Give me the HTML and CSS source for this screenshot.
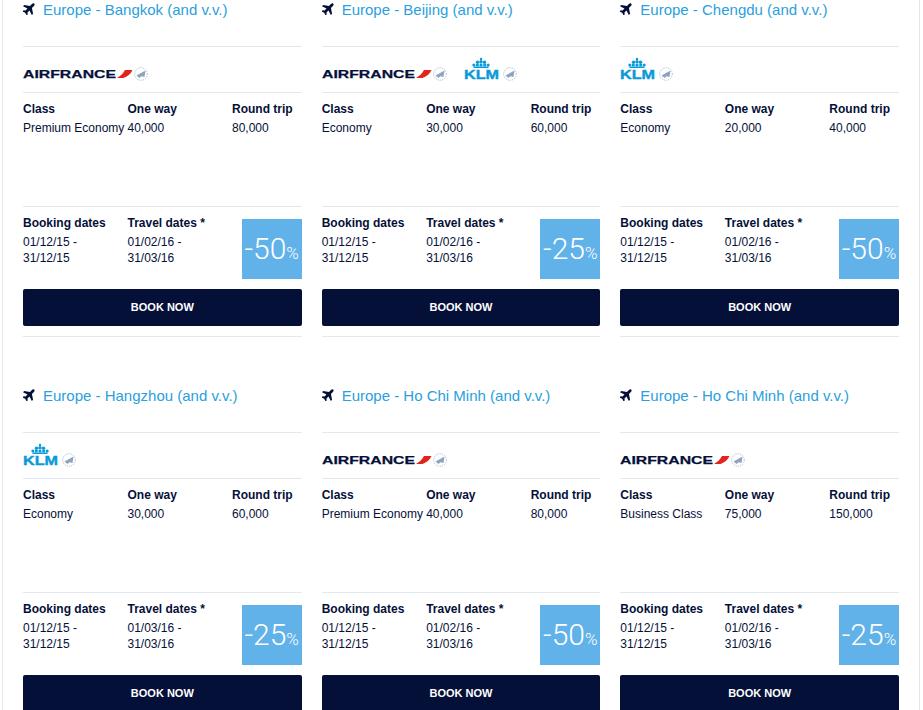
FILE: index.html
```html
<!DOCTYPE html>
<html lang="en">
<head>
<meta charset="utf-8">
<title>Offers</title>
<link rel="stylesheet" href="styles.css">
</head>
<body>
<svg class="defs" width="0" height="0" aria-hidden="true">
  <defs>
    <symbol id="plane" viewBox="0 0 24 24">
      <g transform="rotate(45 12 12)">
        <path d="M12 -3c1.700 0 2.800 1.800 2.800 4v5.500l9.700 6.500v3.500l-9.700-3v5.500l3 2.500v3l-5.800-1.700-5.800 1.700v-3l3-2.500v-5.500l-9.700 3v-3.500l9.700-6.500v-5.500c0-2.200 1.100-4 2.800-4z"/>
      </g>
    </symbol>
    <symbol id="seal" viewBox="0 0 14 14">
      <circle cx="7" cy="7" r="6.300" fill="none" stroke="#9fb0c8" stroke-width="1" stroke-dasharray="1 1.200"/>
      <path d="M2.500 8.500 11.500 3.500 10.500 10 7.500 9.200 5.500 11z" fill="#8fa3c0"/>
    </symbol>
    <symbol id="af" viewBox="0 0 110 12">
      <text x="0" y="9" textLength="93" lengthAdjust="spacingAndGlyphs" class="af-text">AIRFRANCE</text>
      <path d="M102 1h7.500c-1.500 3.500-4.500 6.500-9 8h-6.500c3.500-2 6.500-5 8-8z" fill="#e1251b"/>
    </symbol>
    <symbol id="klm" viewBox="0 0 38 24">
      <g fill="#0a9ad7">
        <circle cx="17" cy="2" r="1.200"/>
        <circle cx="13.500" cy="5.300" r="1.700"/><circle cx="17" cy="4.800" r="1.700"/><circle cx="20.500" cy="5.300" r="1.700"/>
        <circle cx="9.800" cy="7.900" r="1.500"/><circle cx="13.300" cy="8" r="1.600"/><circle cx="17" cy="8" r="1.600"/><circle cx="20.700" cy="8" r="1.600"/><circle cx="24.200" cy="7.900" r="1.500"/>
        <rect x="9.500" y="9.500" width="15" height="1.500"/>
      </g>
      <text x="0" y="22" textLength="35" lengthAdjust="spacingAndGlyphs" class="klm-text">KLM</text>
    </symbol>
  </defs>
</svg>
<main class="page">
  <article class="card">
    <h2 class="title"><svg class="plane"><use href="#plane"/></svg>Europe - Bangkok (and v.v.)</h2>
    <div class="logos"><svg class="logo-af"><use href="#af"/></svg><svg class="seal"><use href="#seal"/></svg></div>
    <div class="fares"><div><b>Class</b><span>Premium Economy</span></div><div><b>One way</b><span>40,000</span></div><div><b>Round trip</b><span>80,000</span></div></div>
    <div class="dates"><div><b>Booking dates</b><span>01/12/15 -<br>31/12/15</span></div><div><b>Travel dates *</b><span>01/02/16 -<br>31/03/16</span></div><div class="badge">-50<small>%</small></div></div>
    <a class="book">BOOK NOW</a>
  </article>
  <article class="card">
    <h2 class="title"><svg class="plane"><use href="#plane"/></svg>Europe - Beijing (and v.v.)</h2>
    <div class="logos"><svg class="logo-af"><use href="#af"/></svg><svg class="seal"><use href="#seal"/></svg><svg class="logo-klm second"><use href="#klm"/></svg><svg class="seal"><use href="#seal"/></svg></div>
    <div class="fares"><div><b>Class</b><span>Economy</span></div><div><b>One way</b><span>30,000</span></div><div><b>Round trip</b><span>60,000</span></div></div>
    <div class="dates"><div><b>Booking dates</b><span>01/12/15 -<br>31/12/15</span></div><div><b>Travel dates *</b><span>01/02/16 -<br>31/03/16</span></div><div class="badge">-25<small>%</small></div></div>
    <a class="book">BOOK NOW</a>
  </article>
  <article class="card">
    <h2 class="title"><svg class="plane"><use href="#plane"/></svg>Europe - Chengdu (and v.v.)</h2>
    <div class="logos"><svg class="logo-klm"><use href="#klm"/></svg><svg class="seal"><use href="#seal"/></svg></div>
    <div class="fares"><div><b>Class</b><span>Economy</span></div><div><b>One way</b><span>20,000</span></div><div><b>Round trip</b><span>40,000</span></div></div>
    <div class="dates"><div><b>Booking dates</b><span>01/12/15 -<br>31/12/15</span></div><div><b>Travel dates *</b><span>01/02/16 -<br>31/03/16</span></div><div class="badge">-50<small>%</small></div></div>
    <a class="book">BOOK NOW</a>
  </article>
  <article class="card">
    <h2 class="title"><svg class="plane"><use href="#plane"/></svg>Europe - Hangzhou (and v.v.)</h2>
    <div class="logos"><svg class="logo-klm"><use href="#klm"/></svg><svg class="seal"><use href="#seal"/></svg></div>
    <div class="fares"><div><b>Class</b><span>Economy</span></div><div><b>One way</b><span>30,000</span></div><div><b>Round trip</b><span>60,000</span></div></div>
    <div class="dates"><div><b>Booking dates</b><span>01/12/15 -<br>31/12/15</span></div><div><b>Travel dates *</b><span>01/03/16 -<br>31/03/16</span></div><div class="badge">-25<small>%</small></div></div>
    <a class="book">BOOK NOW</a>
  </article>
  <article class="card">
    <h2 class="title"><svg class="plane"><use href="#plane"/></svg>Europe - Ho Chi Minh (and v.v.)</h2>
    <div class="logos"><svg class="logo-af"><use href="#af"/></svg><svg class="seal"><use href="#seal"/></svg></div>
    <div class="fares"><div><b>Class</b><span>Premium Economy</span></div><div><b>One way</b><span>40,000</span></div><div><b>Round trip</b><span>80,000</span></div></div>
    <div class="dates"><div><b>Booking dates</b><span>01/12/15 -<br>31/12/15</span></div><div><b>Travel dates *</b><span>01/02/16 -<br>31/03/16</span></div><div class="badge">-50<small>%</small></div></div>
    <a class="book">BOOK NOW</a>
  </article>
  <article class="card">
    <h2 class="title"><svg class="plane"><use href="#plane"/></svg>Europe - Ho Chi Minh (and v.v.)</h2>
    <div class="logos"><svg class="logo-af"><use href="#af"/></svg><svg class="seal"><use href="#seal"/></svg></div>
    <div class="fares"><div><b>Class</b><span>Business Class</span></div><div><b>One way</b><span>75,000</span></div><div><b>Round trip</b><span>150,000</span></div></div>
    <div class="dates"><div><b>Booking dates</b><span>01/12/15 -<br>31/12/15</span></div><div><b>Travel dates *</b><span>01/02/16 -<br>31/03/16</span></div><div class="badge">-25<small>%</small></div></div>
    <a class="book">BOOK NOW</a>
  </article>
</main>
</body>
</html>
```
FILE: styles.css
```css
* { box-sizing: border-box; }
html, body { margin: 0; height: 710px; overflow: hidden; background: #fff; }
body { font-family: "Liberation Sans", Arial, sans-serif; color: #051039; }
.defs { position: absolute; }
.page {
  margin: -49px 3px 0 2px;
  padding: 0 20px 0 20px;
  border-left: 1px solid #e2e8f0;
  border-right: 1px solid #e4e6ea;
  display: grid;
  grid-template-columns: repeat(3, 1fr);
  column-gap: 20px;
}
.card { height: 386px; padding-top: 49px; }
.title {
  margin: 0;
  height: 46px;
  display: flex;
  align-items: flex-start;
  gap: 8px;
  font-size: 15px;
  line-height: 20px;
  font-weight: 400;
  color: #2b9fdc;
}
.plane { width: 12px; height: 12px; margin-top: 3px; fill: #051039; flex: none; }
.logos {
  height: 46px;
  border-top: 1px solid #e2e8f0;
  display: flex;
  align-items: flex-end;
  padding-bottom: 11px;
}
.logo-af { width: 110px; height: 12px; }
.logo-klm { width: 38px; height: 24px; }
.second { margin-left: 17px; }
.seal { width: 14px; height: 14px; margin-left: 1px; }
.af-text { font: 700 11.200px "Liberation Sans", sans-serif; fill: #051039; stroke: #051039; stroke-width: .25px; }
.klm-text { font: 700 13.500px "Liberation Sans", sans-serif; fill: #0a9ad7; stroke: #0a9ad7; stroke-width: .4px; }
.fares, .dates {
  display: grid;
  grid-template-columns: 104.500px 104.500px 1fr;
  font-size: 12px;
  line-height: 16px;
}
.fares b, .dates b { display: block; font-size: 12px; font-weight: 700; }
.fares span, .dates span { display: block; margin-top: 3px; }
.fares { height: 114px; border-top: 1px solid #e2e8f0; padding-top: 8px; }
.dates { height: 83px; border-top: 1px solid #e2e8f0; padding-top: 8px; }
.badge {
  justify-self: end;
  width: 60px;
  height: 60px;
  margin-top: 4px;
  background: #62b2ea;
  color: #fff;
  font-family: Roboto, "Liberation Sans", sans-serif;
  font-size: 30px;
  font-weight: 300;
  line-height: 60px;
  text-align: center;
  white-space: nowrap;
}
.badge small { font-size: 17px; }
.book {
  display: block;
  height: 37px;
  background: #051039;
  border-radius: 2px;
  color: #fff;
  font-size: 11px;
  font-weight: 700;
  line-height: 37px;
  text-align: center;
}
.card::after { content: ""; display: block; margin-top: 10px; border-top: 1px solid #e2e8f0; }
```
